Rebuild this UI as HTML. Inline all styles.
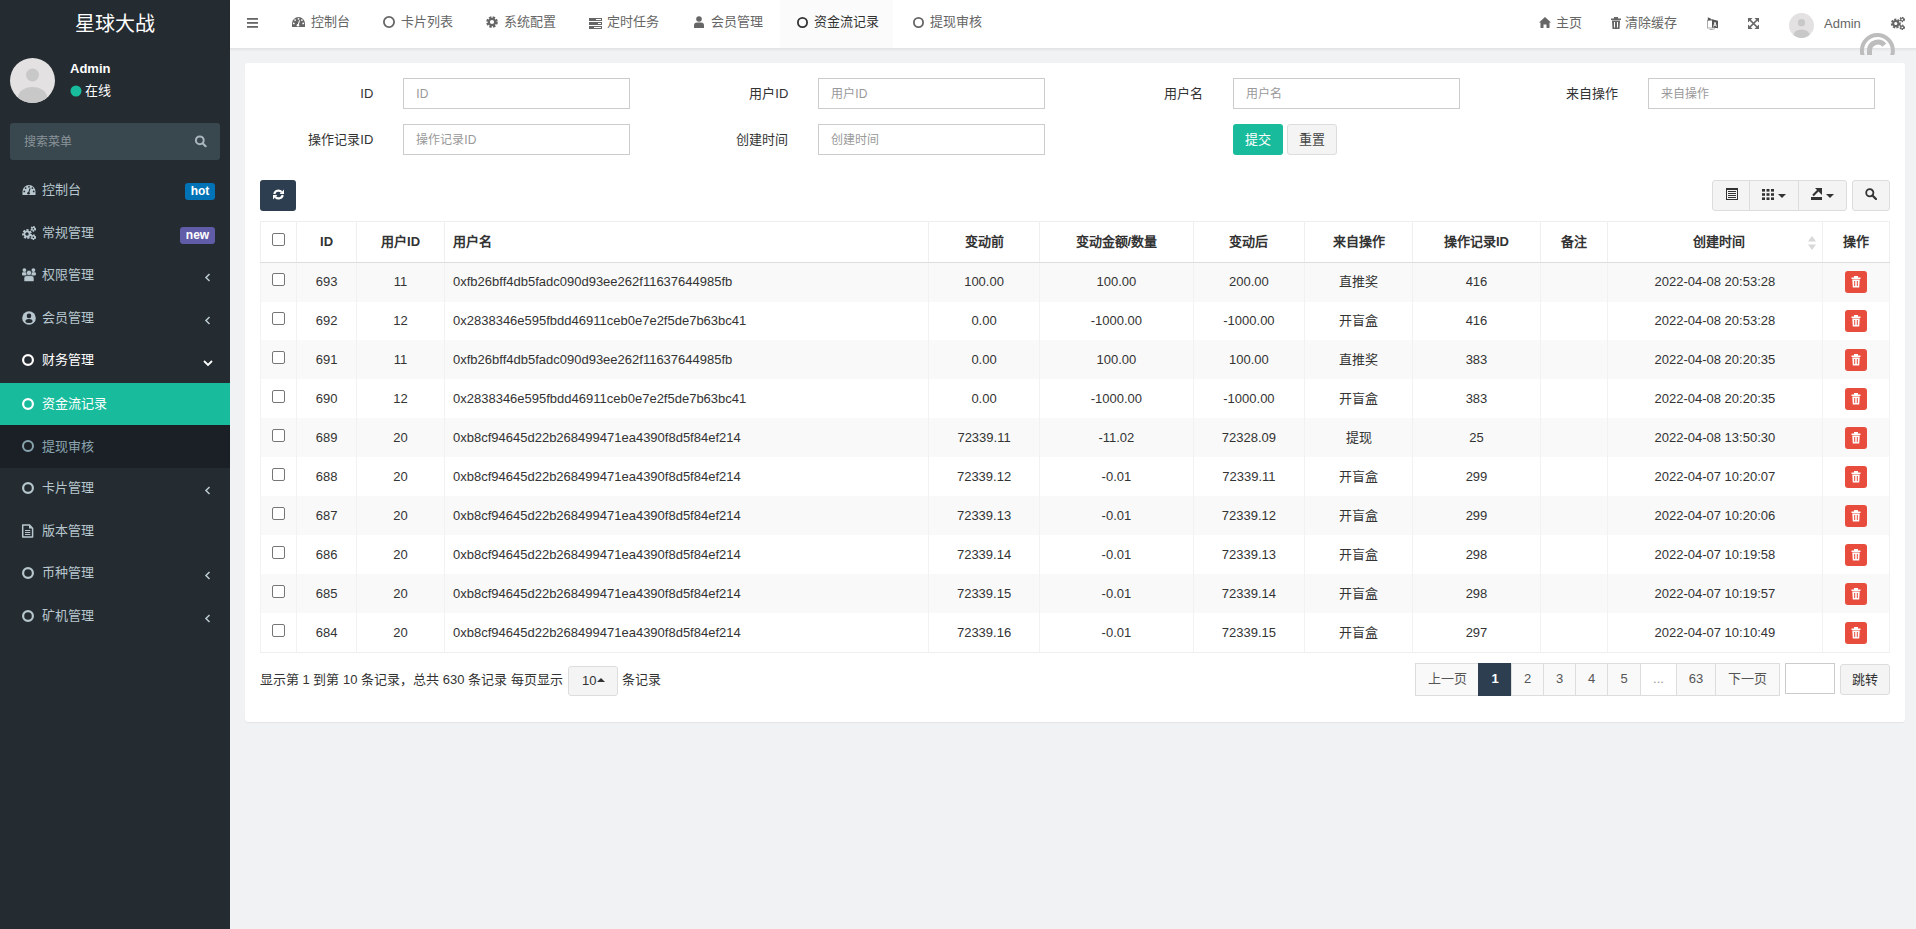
<!DOCTYPE html><html lang="zh-CN"><head><meta charset="utf-8"><title>资金流记录</title><style>
*{box-sizing:border-box;margin:0;padding:0}
html,body{width:1916px;height:929px;overflow:hidden}
body{background:#f0f2f3;font-family:"Liberation Sans", sans-serif;font-size:13px;color:#333;position:relative}
.abs{position:absolute}
#sb{position:absolute;left:0;top:0;width:230px;height:929px;background:#242b31}
.logo{position:absolute;left:0;top:1px;width:230px;height:48px;line-height:46px;text-align:center;color:#fff;font-size:20px}
.mi{position:absolute;left:0;width:230px;color:#b8c7ce;font-size:13px}
.mi .ic{position:absolute;left:21px}
.mi .tx{position:absolute;left:42px;white-space:nowrap}
.badge{position:absolute;right:15px;height:17px;line-height:17px;color:#fff;font-weight:bold;font-size:12px;text-align:center;border-radius:3px}
#hd{position:absolute;left:230px;top:0;width:1686px;height:49px;background:#fff;border-bottom:1px solid #e4e4e4;box-shadow:0 1px 2px rgba(0,0,0,.06)}
.nt{position:absolute;top:0;height:48px;line-height:44px;color:#666;white-space:nowrap}
.panel{position:absolute;left:245px;top:63px;width:1660px;height:659px;background:#fff;border-radius:3px;box-shadow:0 1px 1px rgba(0,0,0,.06)}
.lbl{position:absolute;text-align:right;white-space:nowrap;color:#333}
.inp{position:absolute;height:31px;border:1px solid #ccc;background:#fff;color:#999;padding-left:12px;line-height:31px;white-space:nowrap;font-size:12px}
.btn{position:absolute;border-radius:3px;text-align:center;white-space:nowrap}
table{border-collapse:collapse}
.tbl{position:absolute;left:260px;top:221px;width:1630px;border-collapse:collapse;table-layout:fixed}
.tbl th{height:41px;font-weight:bold;text-align:center;border-left:1px solid #f0f0f0;border-top:1px solid #eee;border-bottom:1px solid #ddd;padding:0;vertical-align:middle}
.tbl td{height:39px;text-align:center;border-left:1px solid #f0f0f0;padding:0;vertical-align:middle;white-space:nowrap}
.tbl tr.odd td{background:#f9f9f9}
.tbl th:last-child,.tbl td:last-child{border-right:1px solid #f0f0f0}
.cb{display:inline-block;width:13px;height:13px;border:1px solid #767676;border-radius:2px;background:#fff;vertical-align:middle}
.del{display:inline-block;width:22px;height:22px;background:#e74c3c;border-radius:3px;vertical-align:middle;position:relative}
.pg{position:absolute;top:663px;height:33px;line-height:29px;text-align:center;border:1px solid #ddd;background:#f9f9f9;color:#555}
</style></head><body>
<div id="sb">
<div class="logo">星球大战</div>
<svg class="abs" style="left:10px;top:58px" width="45" height="45" viewBox="0 0 45 45">
<defs><clipPath id="av1"><circle cx="22.5" cy="22.5" r="22.5"/></clipPath></defs>
<circle cx="22.5" cy="22.5" r="22.5" fill="#e3e1e1"/>
<g clip-path="url(#av1)"><circle cx="22.5" cy="17" r="6.5" fill="#c9c8c8"/>
<ellipse cx="22.5" cy="39.5" rx="14.5" ry="10.5" fill="#c9c8c8"/></g>
</svg>
<div class="abs" style="left:70px;top:61px;color:#fff;font-weight:bold;font-size:13px;line-height:16px">Admin</div>
<svg class="abs" style="left:70px;top:85px" width="12" height="12"><circle cx="6" cy="6" r="5.5" fill="#18bc9c"/></svg>
<div class="abs" style="left:85px;top:82px;color:#fff;font-size:13px;line-height:18px">在线</div>
<div class="abs" style="left:10px;top:123px;width:210px;height:37px;background:#39474f;border-radius:3px"></div>
<div class="abs" style="left:24px;top:133px;color:#8a9499;font-size:12px;line-height:18px">搜索菜单</div>
<svg class="abs" style="left:194px;top:135px" width="13" height="13" viewBox="0 0 13 13"><circle cx="5.8" cy="5.3" r="3.9" fill="none" stroke="#a9b6bc" stroke-width="2"/><path d="M8.6 8.3 L11.6 11.2" stroke="#a9b6bc" stroke-width="2.2" stroke-linecap="round"/></svg>
<div class="mi" style="top:169px;height:42px;color:#b8c7ce">
<div class="ic" style="top:14.0px;height:14px;display:flex;align-items:center;left:22px"><svg width="14" height="10" viewBox="0 0 13 10"><path d="M0 10 L0 6.5 A6.5 6.5 0 0 1 13 6.5 L13 10 Z" fill="#b8c7ce"/><g fill="#242b31"><circle cx="6.5" cy="1.8" r="0.9"/><circle cx="3.1" cy="3.1" r="0.9"/><circle cx="9.9" cy="3.1" r="0.9"/><circle cx="1.8" cy="6.4" r="0.9"/><circle cx="11.2" cy="6.4" r="0.9"/><circle cx="6" cy="8.3" r="1.3"/></g><path d="M6 8.3 L7.6 3.3" stroke="#242b31" stroke-width="1.1"/></svg></div>
<div class="tx" style="top:0;line-height:42px">控制台</div>
<div class="badge" style="top:14.0px;width:30px;background:#0073b7">hot</div>
</div>
<div class="mi" style="top:212px;height:42px;color:#b8c7ce">
<div class="ic" style="top:14.0px;height:14px;display:flex;align-items:center;left:22px"><svg width="14" height="14" viewBox="0 0 14 14"><circle cx="5" cy="8" r="3.6" fill="none" stroke="#b8c7ce" stroke-width="2.6" stroke-dasharray="2 1.2"/><circle cx="5" cy="8" r="2.6" fill="none" stroke="#b8c7ce" stroke-width="1.8"/><circle cx="11.3" cy="2.8" r="1.9" fill="none" stroke="#b8c7ce" stroke-width="1.9" stroke-dasharray="1.2 0.8"/><circle cx="11.3" cy="2.8" r="1.5" fill="none" stroke="#b8c7ce" stroke-width="1.2"/><circle cx="11.3" cy="11.2" r="1.9" fill="none" stroke="#b8c7ce" stroke-width="1.9" stroke-dasharray="1.2 0.8"/><circle cx="11.3" cy="11.2" r="1.5" fill="none" stroke="#b8c7ce" stroke-width="1.2"/></svg></div>
<div class="tx" style="top:0;line-height:42px">常规管理</div>
<div class="badge" style="top:15.0px;width:35px;background:#605ca8">new</div>
</div>
<div class="mi" style="top:254px;height:42px;color:#b8c7ce">
<div class="ic" style="top:14.0px;height:14px;display:flex;align-items:center;left:22px"><svg width="14" height="14" viewBox="0 0 14 14"><circle cx="2.4" cy="2.1" r="1.9" fill="#b8c7ce"/><circle cx="11.4" cy="2.1" r="1.9" fill="#b8c7ce"/><rect x="0" y="4.2" width="4.6" height="3.4" rx="1" fill="#b8c7ce"/><rect x="9.3" y="4.2" width="4.6" height="3.4" rx="1" fill="#b8c7ce"/><circle cx="7" cy="4.9" r="2.6" fill="#b8c7ce" stroke="#242b31" stroke-width="0.6"/><path d="M2 13.5 L2 10.2 Q2 7.6 4.6 7.6 L9.4 7.6 Q12 7.6 12 10.2 L12 13.5 Z" fill="#b8c7ce" stroke="#242b31" stroke-width="0.6"/></svg></div>
<div class="tx" style="top:0;line-height:42px">权限管理</div>
<div class="abs" style="left:204px;top:16.0px"><svg width="7" height="9" viewBox="0 0 7 9"><path d="M5.5 1 L2 4.5 L5.5 8" fill="none" stroke="#b8c7ce" stroke-width="1.6"/></svg></div>
</div>
<div class="mi" style="top:297px;height:42px;color:#b8c7ce">
<div class="ic" style="top:14.0px;height:14px;display:flex;align-items:center;left:22px"><svg width="14" height="14" viewBox="0 0 14 14"><circle cx="7" cy="7" r="6.8" fill="#b8c7ce"/><circle cx="7" cy="4.9" r="2.3" fill="#242b31"/><path d="M3.3 10.2 Q3.8 8 7 8 Q10.2 8 10.7 10.2 Q10.2 12.1 7 12.1 Q3.8 12.1 3.3 10.2 Z" fill="#242b31"/></svg></div>
<div class="tx" style="top:0;line-height:42px">会员管理</div>
<div class="abs" style="left:204px;top:16.0px"><svg width="7" height="9" viewBox="0 0 7 9"><path d="M5.5 1 L2 4.5 L5.5 8" fill="none" stroke="#b8c7ce" stroke-width="1.6"/></svg></div>
</div>
<div class="mi" style="top:339px;height:42px;color:#fff">
<div class="ic" style="top:14.0px;height:14px;display:flex;align-items:center;left:22px"><svg width="12" height="12" viewBox="0 0 12 12"><circle cx="6.0" cy="6.0" r="4.9" fill="none" stroke="#fff" stroke-width="2.2"/></svg></div>
<div class="tx" style="top:0;line-height:42px">财务管理</div>
<div class="abs" style="left:203px;top:16.0px"><svg width="10" height="8" viewBox="0 0 10 8"><path d="M1 2 L5 6 L9 2" fill="none" stroke="#fff" stroke-width="1.8"/></svg></div>
</div>
<div class="mi" style="top:383px;height:42px;background:#18bc9c;color:#fff">
<div class="ic" style="top:15px;left:22px"><svg width="12" height="12" viewBox="0 0 12 12"><circle cx="6.0" cy="6.0" r="4.9" fill="none" stroke="#fff" stroke-width="2.2"/></svg></div><div class="tx" style="line-height:42px">资金流记录</div></div>
<div class="mi" style="top:425px;height:43px;background:#1b2026;color:#8aa4af">
<div class="ic" style="top:15px;left:22px"><svg width="12" height="12" viewBox="0 0 12 12"><circle cx="6.0" cy="6.0" r="5.0" fill="none" stroke="#8aa4af" stroke-width="2"/></svg></div><div class="tx" style="line-height:43px">提现审核</div></div>
<div class="mi" style="top:467px;height:42px">
<div class="ic" style="top:14.0px;height:14px;display:flex;align-items:center;left:22px"><svg width="12" height="12" viewBox="0 0 12 12"><circle cx="6.0" cy="6.0" r="4.9" fill="none" stroke="#b8c7ce" stroke-width="2.2"/></svg></div>
<div class="tx" style="top:0;line-height:42px">卡片管理</div>
<div class="abs" style="left:204px;top:16.0px"><svg width="7" height="9" viewBox="0 0 7 9"><path d="M5.5 1 L2 4.5 L5.5 8" fill="none" stroke="#b8c7ce" stroke-width="1.6"/></svg></div>
</div>
<div class="mi" style="top:510px;height:42px">
<div class="ic" style="top:14.0px;height:14px;display:flex;align-items:center;"><svg width="13" height="14" viewBox="0 0 13 14"><path d="M1.7 0.9 L8.3 0.9 L11.6 4.2 L11.6 13 L1.7 13 Z" fill="none" stroke="#b8c7ce" stroke-width="1.5" stroke-linejoin="round"/><path d="M8 1 L8 4.5 L11.5 4.5 Z" fill="#b8c7ce"/><path d="M4 6.5H9.3M4 8.5H9.3M4 10.5H9.3" stroke="#b8c7ce" stroke-width="1"/></svg></div>
<div class="tx" style="top:0;line-height:42px">版本管理</div>
</div>
<div class="mi" style="top:552px;height:42px">
<div class="ic" style="top:14.0px;height:14px;display:flex;align-items:center;left:22px"><svg width="12" height="12" viewBox="0 0 12 12"><circle cx="6.0" cy="6.0" r="4.9" fill="none" stroke="#b8c7ce" stroke-width="2.2"/></svg></div>
<div class="tx" style="top:0;line-height:42px">币种管理</div>
<div class="abs" style="left:204px;top:16.0px"><svg width="7" height="9" viewBox="0 0 7 9"><path d="M5.5 1 L2 4.5 L5.5 8" fill="none" stroke="#b8c7ce" stroke-width="1.6"/></svg></div>
</div>
<div class="mi" style="top:595px;height:42px">
<div class="ic" style="top:14.0px;height:14px;display:flex;align-items:center;left:22px"><svg width="12" height="12" viewBox="0 0 12 12"><circle cx="6.0" cy="6.0" r="4.9" fill="none" stroke="#b8c7ce" stroke-width="2.2"/></svg></div>
<div class="tx" style="top:0;line-height:42px">矿机管理</div>
<div class="abs" style="left:204px;top:16.0px"><svg width="7" height="9" viewBox="0 0 7 9"><path d="M5.5 1 L2 4.5 L5.5 8" fill="none" stroke="#b8c7ce" stroke-width="1.6"/></svg></div>
</div>
</div>
<div id="hd"></div>
<svg class="abs" style="left:247px;top:18px" width="11" height="10"><rect x="0" y="0" width="11" height="1.8" fill="#666"/><rect x="0" y="4" width="11" height="1.8" fill="#666"/><rect x="0" y="8" width="11" height="1.8" fill="#666"/></svg>
<div class="abs" style="left:780px;top:0;width:113px;height:48px;background:#fbfbfb"></div>
<div class="abs" style="left:292px;top:16px;height:12px;display:flex;align-items:center"><svg width="13" height="10" viewBox="0 0 13 10"><path d="M0 10 L0 6.5 A6.5 6.5 0 0 1 13 6.5 L13 10 Z" fill="#666"/><g fill="#fff"><circle cx="6.5" cy="1.8" r="0.9"/><circle cx="3.1" cy="3.1" r="0.9"/><circle cx="9.9" cy="3.1" r="0.9"/><circle cx="1.8" cy="6.4" r="0.9"/><circle cx="11.2" cy="6.4" r="0.9"/><circle cx="6" cy="8.3" r="1.3"/></g><path d="M6 8.3 L7.6 3.3" stroke="#fff" stroke-width="1.1"/></svg></div>
<div class="nt" style="left:311px;color:#666">控制台</div>
<div class="abs" style="left:383px;top:16px;height:12px;display:flex;align-items:center"><svg width="12" height="12" viewBox="0 0 12 12"><circle cx="6.0" cy="6.0" r="5.1" fill="none" stroke="#666" stroke-width="1.8"/></svg></div>
<div class="nt" style="left:401px;color:#666">卡片列表</div>
<div class="abs" style="left:486px;top:16px;height:12px;display:flex;align-items:center"><svg width="12" height="12" viewBox="0 0 12 12"><circle cx="6" cy="6" r="4.3" fill="none" stroke="#666" stroke-width="3" stroke-dasharray="2.2 1.2"/><circle cx="6" cy="6" r="3.2" fill="none" stroke="#666" stroke-width="2.2"/></svg></div>
<div class="nt" style="left:504px;color:#666">系统配置</div>
<div class="abs" style="left:589px;top:17px;height:12px;display:flex;align-items:center"><svg width="13" height="11" viewBox="0 0 13 11"><rect x="0" y="0" width="13" height="3" fill="#666"/><rect x="0" y="4" width="13" height="3" fill="#666"/><rect x="0" y="8" width="13" height="3" fill="#666"/><rect x="7" y="1" width="5" height="1" fill="#fff"/><rect x="9" y="5" width="3" height="1" fill="#fff"/><rect x="5" y="9" width="7" height="1" fill="#fff"/></svg></div>
<div class="nt" style="left:607px;color:#666">定时任务</div>
<div class="abs" style="left:694px;top:16px;height:12px;display:flex;align-items:center"><svg width="10" height="12" viewBox="0 0 10 12"><circle cx="5" cy="3" r="2.8" fill="#666"/><path d="M0 12 L0 9.5 Q0 6.5 3 6.5 L7 6.5 Q10 6.5 10 9.5 L10 12 Z" fill="#666"/></svg></div>
<div class="nt" style="left:711px;color:#666">会员管理</div>
<div class="abs" style="left:797px;top:16px;height:12px;display:flex;align-items:center"><svg width="11" height="11" viewBox="0 0 11 11"><circle cx="5.5" cy="5.5" r="4.6" fill="none" stroke="#333" stroke-width="1.8"/></svg></div>
<div class="nt" style="left:814px;color:#333">资金流记录</div>
<div class="abs" style="left:913px;top:16px;height:12px;display:flex;align-items:center"><svg width="11" height="11" viewBox="0 0 11 11"><circle cx="5.5" cy="5.5" r="4.6" fill="none" stroke="#666" stroke-width="1.8"/></svg></div>
<div class="nt" style="left:930px;color:#666">提现审核</div>
<svg class="abs" style="left:1539px;top:17px" width="12" height="11" viewBox="0 0 12 11"><path d="M6 0 L12 5.5 L10.5 5.5 L10.5 11 L7.5 11 L7.5 7.5 L4.5 7.5 L4.5 11 L1.5 11 L1.5 5.5 L0 5.5 Z" fill="#666"/></svg>
<div class="nt" style="left:1556px;line-height:46px">主页</div>
<svg class="abs" style="left:1611px;top:17px" width="10" height="12" viewBox="0 0 10 12"><rect x="0" y="1.5" width="10" height="1.5" fill="#666"/><rect x="3" y="0" width="4" height="2" fill="#666"/><path d="M1 3.5 L9 3.5 L8.5 12 L1.5 12 Z" fill="#666"/><rect x="3" y="5" width="1" height="5.5" fill="#fff"/><rect x="6" y="5" width="1" height="5.5" fill="#fff"/></svg>
<div class="nt" style="left:1625px;line-height:46px">清除缓存</div>
<svg class="abs" style="left:1707px;top:17px" width="11" height="13" viewBox="0 0 11 13"><rect x="0.5" y="3.5" width="5" height="7.5" fill="none" stroke="#999" stroke-width="0.8"/><path d="M5 2.3 L11 3.8 L11 11.3 L5 10.5 Z" fill="#555"/><path d="M0.8 0.3 L5.5 2.4 L0.8 3.4 Z" fill="#555"/><path d="M6.6 9.6 L8 5.2 L9.4 9.6 M7.1 8.2 H8.9" fill="none" stroke="#fff" stroke-width="0.9"/><path d="M2.5 12.5 Q6 12.9 8 11.6" fill="none" stroke="#888" stroke-width="0.7"/></svg>
<svg class="abs" style="left:1748px;top:18px" width="11" height="11" viewBox="0 0 11 11"><path d="M2 2 L9 9 M9 2 L2 9" stroke="#666" stroke-width="1.7"/><path d="M0 0 L4.6 0 L0 4.6 Z M11 0 L6.4 0 L11 4.6 Z M0 11 L4.6 11 L0 6.4 Z M11 11 L6.4 11 L11 6.4 Z" fill="#666"/></svg>
<svg class="abs" style="left:1789px;top:13px" width="25" height="25" viewBox="0 0 45 45">
<defs><clipPath id="av2"><circle cx="22.5" cy="22.5" r="22.5"/></clipPath></defs>
<circle cx="22.5" cy="22.5" r="22.5" fill="#e3e1e1"/>
<g clip-path="url(#av2)"><circle cx="22.5" cy="17.5" r="6.5" fill="#c9c8c8"/>
<ellipse cx="22.5" cy="40" rx="14.5" ry="10.5" fill="#c9c8c8"/></g>
</svg>
<div class="nt" style="left:1824px;line-height:48px">Admin</div>
<svg class="abs" style="left:1890px;top:16px" width="15" height="14" viewBox="0 0 15 14"><circle cx="5.8" cy="7.5" r="3.7" fill="none" stroke="#666" stroke-width="2.6" stroke-dasharray="2 1.1"/><circle cx="5.8" cy="7.5" r="2.6" fill="none" stroke="#666" stroke-width="2"/><circle cx="12.2" cy="3.5" r="1.9" fill="none" stroke="#666" stroke-width="1.8" stroke-dasharray="1.1 0.9"/><circle cx="12.2" cy="3.5" r="1.5" fill="none" stroke="#666" stroke-width="1.1"/><circle cx="12.2" cy="11.4" r="1.9" fill="none" stroke="#666" stroke-width="1.8" stroke-dasharray="1.1 0.9"/><circle cx="12.2" cy="11.4" r="1.5" fill="none" stroke="#666" stroke-width="1.1"/></svg>
<div class="panel"></div>
<div class="lbl" style="left:260px;width:113.3px;top:78px;line-height:31px">ID</div>
<div class="inp" style="left:403.3px;top:78px;width:227px">ID</div>
<div class="lbl" style="left:675px;width:113.3px;top:78px;line-height:31px">用户ID</div>
<div class="inp" style="left:818.3px;top:78px;width:227px">用户ID</div>
<div class="lbl" style="left:1090px;width:113.3px;top:78px;line-height:31px">用户名</div>
<div class="inp" style="left:1233.3px;top:78px;width:227px">用户名</div>
<div class="lbl" style="left:1505px;width:113.3px;top:78px;line-height:31px">来自操作</div>
<div class="inp" style="left:1648.3px;top:78px;width:227px">来自操作</div>
<div class="lbl" style="left:260px;width:113.3px;top:124px;line-height:31px">操作记录ID</div>
<div class="inp" style="left:403.3px;top:124px;width:227px">操作记录ID</div>
<div class="lbl" style="left:675px;width:113.3px;top:124px;line-height:31px">创建时间</div>
<div class="inp" style="left:818.3px;top:124px;width:227px">创建时间</div>
<div class="btn" style="left:1233px;top:124px;width:50px;height:31px;line-height:31px;background:#18bc9c;color:#fff">提交</div>
<div class="btn" style="left:1287px;top:124px;width:50px;height:31px;line-height:29px;background:#f4f4f4;border:1px solid #ddd;color:#444">重置</div>
<div class="btn" style="left:260px;top:180px;width:36px;height:31px;background:#2c3e50"></div>
<svg class="abs" style="left:273px;top:189px" width="11" height="11" viewBox="0 0 11 11"><path d="M1.3 5 A4.2 4.2 0 0 1 8.6 3" fill="none" stroke="#fff" stroke-width="2.2"/><path d="M11 0.6 L11 5 L6.6 5 Z" fill="#fff"/><path d="M9.7 6 A4.2 4.2 0 0 1 2.4 8" fill="none" stroke="#fff" stroke-width="2.2"/><path d="M0 10.4 L0 6 L4.4 6 Z" fill="#fff"/></svg>
<div class="btn" style="left:1712px;top:180px;width:135px;height:31px;background:#f4f4f4;border:1px solid #ddd"></div>
<div class="abs" style="left:1749px;top:180px;width:1px;height:31px;background:#ddd"></div>
<div class="abs" style="left:1798px;top:180px;width:1px;height:31px;background:#ddd"></div>
<div class="btn" style="left:1852px;top:180px;width:38px;height:31px;background:#f4f4f4;border:1px solid #ddd"></div>
<svg class="abs" style="left:1726px;top:188px" width="12" height="12" viewBox="0 0 12 12"><rect x="0.5" y="0.5" width="11" height="11" fill="none" stroke="#333" stroke-width="1"/><rect x="0" y="0" width="12" height="2" fill="#333"/><path d="M2 3.5H10M2 5.5H10M2 7.5H10M2 9.5H10" stroke="#333" stroke-width="1"/></svg>
<svg class="abs" style="left:1762px;top:189px" width="12" height="11" viewBox="0 0 12 11"><g fill="#333"><rect x="0" y="0" width="3" height="2.6"/><rect x="4.5" y="0" width="3" height="2.6"/><rect x="9" y="0" width="3" height="2.6"/><rect x="0" y="4.2" width="3" height="2.6"/><rect x="4.5" y="4.2" width="3" height="2.6"/><rect x="9" y="4.2" width="3" height="2.6"/><rect x="0" y="8.4" width="3" height="2.6"/><rect x="4.5" y="8.4" width="3" height="2.6"/><rect x="9" y="8.4" width="3" height="2.6"/></g></svg>
<svg class="abs" style="left:1778px;top:194px" width="8" height="4"><path d="M0 0 L8 0 L4 4 Z" fill="#333"/></svg>
<svg class="abs" style="left:1811px;top:188px" width="11" height="12" viewBox="0 0 11 12"><rect x="0" y="9" width="11" height="3" fill="#333"/><path d="M2 7.5 L7.5 2" stroke="#333" stroke-width="2.2"/><path d="M4 0 L11 0 L11 7 Z" fill="#333"/></svg>
<svg class="abs" style="left:1826px;top:194px" width="8" height="4"><path d="M0 0 L8 0 L4 4 Z" fill="#333"/></svg>
<svg class="abs" style="left:1865px;top:188px" width="12" height="12" viewBox="0 0 12 12"><circle cx="4.8" cy="4.8" r="3.6" fill="none" stroke="#333" stroke-width="1.8"/><path d="M7.5 7.5 L11 11" stroke="#333" stroke-width="2.2" stroke-linecap="round"/></svg>
<div class="abs" style="left:260px;top:263px;width:1630px;height:39px;background:#f9f9f9"></div>
<div class="abs" style="left:260px;top:340px;width:1630px;height:39px;background:#f9f9f9"></div>
<div class="abs" style="left:260px;top:418px;width:1630px;height:39px;background:#f9f9f9"></div>
<div class="abs" style="left:260px;top:496px;width:1630px;height:39px;background:#f9f9f9"></div>
<div class="abs" style="left:260px;top:574px;width:1630px;height:39px;background:#f9f9f9"></div>
<div class="abs" style="left:260px;top:221px;width:1630px;height:1px;background:#eee"></div>
<div class="abs" style="left:260px;top:262px;width:1630px;height:1px;background:#ddd"></div>
<div class="abs" style="left:260px;top:652px;width:1630px;height:1px;background:#eee"></div>
<div class="abs" style="left:260px;top:221px;width:1px;height:41px;background:#efefef"></div>
<div class="abs" style="left:260px;top:263px;width:1px;height:389px;background:#f2f2f2"></div>
<div class="abs" style="left:296px;top:221px;width:1px;height:41px;background:#efefef"></div>
<div class="abs" style="left:296px;top:263px;width:1px;height:389px;background:#f2f2f2"></div>
<div class="abs" style="left:356px;top:221px;width:1px;height:41px;background:#efefef"></div>
<div class="abs" style="left:356px;top:263px;width:1px;height:389px;background:#f2f2f2"></div>
<div class="abs" style="left:444px;top:221px;width:1px;height:41px;background:#efefef"></div>
<div class="abs" style="left:444px;top:263px;width:1px;height:389px;background:#f2f2f2"></div>
<div class="abs" style="left:928px;top:221px;width:1px;height:41px;background:#efefef"></div>
<div class="abs" style="left:928px;top:263px;width:1px;height:389px;background:#f2f2f2"></div>
<div class="abs" style="left:1039px;top:221px;width:1px;height:41px;background:#efefef"></div>
<div class="abs" style="left:1039px;top:263px;width:1px;height:389px;background:#f2f2f2"></div>
<div class="abs" style="left:1193px;top:221px;width:1px;height:41px;background:#efefef"></div>
<div class="abs" style="left:1193px;top:263px;width:1px;height:389px;background:#f2f2f2"></div>
<div class="abs" style="left:1304px;top:221px;width:1px;height:41px;background:#efefef"></div>
<div class="abs" style="left:1304px;top:263px;width:1px;height:389px;background:#f2f2f2"></div>
<div class="abs" style="left:1412px;top:221px;width:1px;height:41px;background:#efefef"></div>
<div class="abs" style="left:1412px;top:263px;width:1px;height:389px;background:#f2f2f2"></div>
<div class="abs" style="left:1540px;top:221px;width:1px;height:41px;background:#efefef"></div>
<div class="abs" style="left:1540px;top:263px;width:1px;height:389px;background:#f2f2f2"></div>
<div class="abs" style="left:1607px;top:221px;width:1px;height:41px;background:#efefef"></div>
<div class="abs" style="left:1607px;top:263px;width:1px;height:389px;background:#f2f2f2"></div>
<div class="abs" style="left:1822px;top:221px;width:1px;height:41px;background:#efefef"></div>
<div class="abs" style="left:1822px;top:263px;width:1px;height:389px;background:#f2f2f2"></div>
<div class="abs" style="left:1889px;top:221px;width:1px;height:41px;background:#efefef"></div>
<div class="abs" style="left:1889px;top:263px;width:1px;height:389px;background:#f2f2f2"></div>
<div class="cb abs" style="left:272px;top:233px"></div>
<div class="abs" style="left:296.4px;top:221px;width:60.30000000000001px;height:41px;line-height:41px;text-align:center;white-space:nowrap;font-weight:bold;color:#333">ID</div>
<div class="abs" style="left:356.7px;top:221px;width:87.69999999999999px;height:41px;line-height:41px;text-align:center;white-space:nowrap;font-weight:bold;color:#333">用户ID</div>
<div class="abs" style="left:453.0px;top:221px;height:41px;line-height:41px;white-space:nowrap;font-weight:bold;color:#333">用户名</div>
<div class="abs" style="left:928.6px;top:221px;width:110.89999999999998px;height:41px;line-height:41px;text-align:center;white-space:nowrap;font-weight:bold;color:#333">变动前</div>
<div class="abs" style="left:1039.5px;top:221px;width:153.79999999999995px;height:41px;line-height:41px;text-align:center;white-space:nowrap;font-weight:bold;color:#333">变动金额/数量</div>
<div class="abs" style="left:1193.3px;top:221px;width:111.29999999999995px;height:41px;line-height:41px;text-align:center;white-space:nowrap;font-weight:bold;color:#333">变动后</div>
<div class="abs" style="left:1304.6px;top:221px;width:107.90000000000009px;height:41px;line-height:41px;text-align:center;white-space:nowrap;font-weight:bold;color:#333">来自操作</div>
<div class="abs" style="left:1412.5px;top:221px;width:128.0px;height:41px;line-height:41px;text-align:center;white-space:nowrap;font-weight:bold;color:#333">操作记录ID</div>
<div class="abs" style="left:1540.5px;top:221px;width:66.5px;height:41px;line-height:41px;text-align:center;white-space:nowrap;font-weight:bold;color:#333">备注</div>
<div class="abs" style="left:1615px;top:221px;width:207.70000000000005px;height:41px;line-height:41px;text-align:center;white-space:nowrap;font-weight:bold;color:#333">创建时间</div>
<div class="abs" style="left:1822.7px;top:221px;width:66.79999999999995px;height:41px;line-height:41px;text-align:center;white-space:nowrap;font-weight:bold;color:#333">操作</div>
<svg class="abs" style="left:1808px;top:236px" width="8" height="14" viewBox="0 0 8 14"><path d="M4 0 L8 5.5 L0 5.5 Z" fill="#d8d8d8"/><path d="M4 14 L8 8.5 L0 8.5 Z" fill="#d8d8d8"/></svg>
<div class="cb abs" style="left:272px;top:273px"></div>
<div class="abs" style="left:296.4px;top:262px;width:60.30000000000001px;height:39px;line-height:39px;text-align:center;white-space:nowrap;">693</div>
<div class="abs" style="left:356.7px;top:262px;width:87.69999999999999px;height:39px;line-height:39px;text-align:center;white-space:nowrap;">11</div>
<div class="abs" style="left:453.0px;top:262px;height:39px;line-height:39px;white-space:nowrap;">0xfb26bff4db5fadc090d93ee262f11637644985fb</div>
<div class="abs" style="left:928.6px;top:262px;width:110.89999999999998px;height:39px;line-height:39px;text-align:center;white-space:nowrap;">100.00</div>
<div class="abs" style="left:1039.5px;top:262px;width:153.79999999999995px;height:39px;line-height:39px;text-align:center;white-space:nowrap;">100.00</div>
<div class="abs" style="left:1193.3px;top:262px;width:111.29999999999995px;height:39px;line-height:39px;text-align:center;white-space:nowrap;">200.00</div>
<div class="abs" style="left:1304.6px;top:262px;width:107.90000000000009px;height:39px;line-height:39px;text-align:center;white-space:nowrap;">直推奖</div>
<div class="abs" style="left:1412.5px;top:262px;width:128.0px;height:39px;line-height:39px;text-align:center;white-space:nowrap;">416</div>
<div class="abs" style="left:1607px;top:262px;width:215.70000000000005px;height:39px;line-height:39px;text-align:center;white-space:nowrap;">2022-04-08 20:53:28</div>
<div class="abs" style="left:1845px;top:271px;width:22px;height:22px;background:#e74c3c;border-radius:3px"></div>
<svg class="abs" style="left:1851px;top:276px" width="10" height="12" viewBox="0 0 10 12"><rect x="0.5" y="1.5" width="9" height="1.5" fill="#fff"/><rect x="3" y="0" width="4" height="2" fill="#fff"/><path d="M1.3 3.5 L8.7 3.5 L8.2 11.5 L1.8 11.5 Z" fill="#fff"/><rect x="3.2" y="5" width="1" height="5" fill="#e74c3c"/><rect x="5.8" y="5" width="1" height="5" fill="#e74c3c"/></svg>
<div class="cb abs" style="left:272px;top:312px"></div>
<div class="abs" style="left:296.4px;top:301px;width:60.30000000000001px;height:39px;line-height:39px;text-align:center;white-space:nowrap;">692</div>
<div class="abs" style="left:356.7px;top:301px;width:87.69999999999999px;height:39px;line-height:39px;text-align:center;white-space:nowrap;">12</div>
<div class="abs" style="left:453.0px;top:301px;height:39px;line-height:39px;white-space:nowrap;">0x2838346e595fbdd46911ceb0e7e2f5de7b63bc41</div>
<div class="abs" style="left:928.6px;top:301px;width:110.89999999999998px;height:39px;line-height:39px;text-align:center;white-space:nowrap;">0.00</div>
<div class="abs" style="left:1039.5px;top:301px;width:153.79999999999995px;height:39px;line-height:39px;text-align:center;white-space:nowrap;">-1000.00</div>
<div class="abs" style="left:1193.3px;top:301px;width:111.29999999999995px;height:39px;line-height:39px;text-align:center;white-space:nowrap;">-1000.00</div>
<div class="abs" style="left:1304.6px;top:301px;width:107.90000000000009px;height:39px;line-height:39px;text-align:center;white-space:nowrap;">开盲盒</div>
<div class="abs" style="left:1412.5px;top:301px;width:128.0px;height:39px;line-height:39px;text-align:center;white-space:nowrap;">416</div>
<div class="abs" style="left:1607px;top:301px;width:215.70000000000005px;height:39px;line-height:39px;text-align:center;white-space:nowrap;">2022-04-08 20:53:28</div>
<div class="abs" style="left:1845px;top:310px;width:22px;height:22px;background:#e74c3c;border-radius:3px"></div>
<svg class="abs" style="left:1851px;top:315px" width="10" height="12" viewBox="0 0 10 12"><rect x="0.5" y="1.5" width="9" height="1.5" fill="#fff"/><rect x="3" y="0" width="4" height="2" fill="#fff"/><path d="M1.3 3.5 L8.7 3.5 L8.2 11.5 L1.8 11.5 Z" fill="#fff"/><rect x="3.2" y="5" width="1" height="5" fill="#e74c3c"/><rect x="5.8" y="5" width="1" height="5" fill="#e74c3c"/></svg>
<div class="cb abs" style="left:272px;top:351px"></div>
<div class="abs" style="left:296.4px;top:340px;width:60.30000000000001px;height:39px;line-height:39px;text-align:center;white-space:nowrap;">691</div>
<div class="abs" style="left:356.7px;top:340px;width:87.69999999999999px;height:39px;line-height:39px;text-align:center;white-space:nowrap;">11</div>
<div class="abs" style="left:453.0px;top:340px;height:39px;line-height:39px;white-space:nowrap;">0xfb26bff4db5fadc090d93ee262f11637644985fb</div>
<div class="abs" style="left:928.6px;top:340px;width:110.89999999999998px;height:39px;line-height:39px;text-align:center;white-space:nowrap;">0.00</div>
<div class="abs" style="left:1039.5px;top:340px;width:153.79999999999995px;height:39px;line-height:39px;text-align:center;white-space:nowrap;">100.00</div>
<div class="abs" style="left:1193.3px;top:340px;width:111.29999999999995px;height:39px;line-height:39px;text-align:center;white-space:nowrap;">100.00</div>
<div class="abs" style="left:1304.6px;top:340px;width:107.90000000000009px;height:39px;line-height:39px;text-align:center;white-space:nowrap;">直推奖</div>
<div class="abs" style="left:1412.5px;top:340px;width:128.0px;height:39px;line-height:39px;text-align:center;white-space:nowrap;">383</div>
<div class="abs" style="left:1607px;top:340px;width:215.70000000000005px;height:39px;line-height:39px;text-align:center;white-space:nowrap;">2022-04-08 20:20:35</div>
<div class="abs" style="left:1845px;top:349px;width:22px;height:22px;background:#e74c3c;border-radius:3px"></div>
<svg class="abs" style="left:1851px;top:354px" width="10" height="12" viewBox="0 0 10 12"><rect x="0.5" y="1.5" width="9" height="1.5" fill="#fff"/><rect x="3" y="0" width="4" height="2" fill="#fff"/><path d="M1.3 3.5 L8.7 3.5 L8.2 11.5 L1.8 11.5 Z" fill="#fff"/><rect x="3.2" y="5" width="1" height="5" fill="#e74c3c"/><rect x="5.8" y="5" width="1" height="5" fill="#e74c3c"/></svg>
<div class="cb abs" style="left:272px;top:390px"></div>
<div class="abs" style="left:296.4px;top:379px;width:60.30000000000001px;height:39px;line-height:39px;text-align:center;white-space:nowrap;">690</div>
<div class="abs" style="left:356.7px;top:379px;width:87.69999999999999px;height:39px;line-height:39px;text-align:center;white-space:nowrap;">12</div>
<div class="abs" style="left:453.0px;top:379px;height:39px;line-height:39px;white-space:nowrap;">0x2838346e595fbdd46911ceb0e7e2f5de7b63bc41</div>
<div class="abs" style="left:928.6px;top:379px;width:110.89999999999998px;height:39px;line-height:39px;text-align:center;white-space:nowrap;">0.00</div>
<div class="abs" style="left:1039.5px;top:379px;width:153.79999999999995px;height:39px;line-height:39px;text-align:center;white-space:nowrap;">-1000.00</div>
<div class="abs" style="left:1193.3px;top:379px;width:111.29999999999995px;height:39px;line-height:39px;text-align:center;white-space:nowrap;">-1000.00</div>
<div class="abs" style="left:1304.6px;top:379px;width:107.90000000000009px;height:39px;line-height:39px;text-align:center;white-space:nowrap;">开盲盒</div>
<div class="abs" style="left:1412.5px;top:379px;width:128.0px;height:39px;line-height:39px;text-align:center;white-space:nowrap;">383</div>
<div class="abs" style="left:1607px;top:379px;width:215.70000000000005px;height:39px;line-height:39px;text-align:center;white-space:nowrap;">2022-04-08 20:20:35</div>
<div class="abs" style="left:1845px;top:388px;width:22px;height:22px;background:#e74c3c;border-radius:3px"></div>
<svg class="abs" style="left:1851px;top:393px" width="10" height="12" viewBox="0 0 10 12"><rect x="0.5" y="1.5" width="9" height="1.5" fill="#fff"/><rect x="3" y="0" width="4" height="2" fill="#fff"/><path d="M1.3 3.5 L8.7 3.5 L8.2 11.5 L1.8 11.5 Z" fill="#fff"/><rect x="3.2" y="5" width="1" height="5" fill="#e74c3c"/><rect x="5.8" y="5" width="1" height="5" fill="#e74c3c"/></svg>
<div class="cb abs" style="left:272px;top:429px"></div>
<div class="abs" style="left:296.4px;top:418px;width:60.30000000000001px;height:39px;line-height:39px;text-align:center;white-space:nowrap;">689</div>
<div class="abs" style="left:356.7px;top:418px;width:87.69999999999999px;height:39px;line-height:39px;text-align:center;white-space:nowrap;">20</div>
<div class="abs" style="left:453.0px;top:418px;height:39px;line-height:39px;white-space:nowrap;">0xb8cf94645d22b268499471ea4390f8d5f84ef214</div>
<div class="abs" style="left:928.6px;top:418px;width:110.89999999999998px;height:39px;line-height:39px;text-align:center;white-space:nowrap;">72339.11</div>
<div class="abs" style="left:1039.5px;top:418px;width:153.79999999999995px;height:39px;line-height:39px;text-align:center;white-space:nowrap;">-11.02</div>
<div class="abs" style="left:1193.3px;top:418px;width:111.29999999999995px;height:39px;line-height:39px;text-align:center;white-space:nowrap;">72328.09</div>
<div class="abs" style="left:1304.6px;top:418px;width:107.90000000000009px;height:39px;line-height:39px;text-align:center;white-space:nowrap;">提现</div>
<div class="abs" style="left:1412.5px;top:418px;width:128.0px;height:39px;line-height:39px;text-align:center;white-space:nowrap;">25</div>
<div class="abs" style="left:1607px;top:418px;width:215.70000000000005px;height:39px;line-height:39px;text-align:center;white-space:nowrap;">2022-04-08 13:50:30</div>
<div class="abs" style="left:1845px;top:427px;width:22px;height:22px;background:#e74c3c;border-radius:3px"></div>
<svg class="abs" style="left:1851px;top:432px" width="10" height="12" viewBox="0 0 10 12"><rect x="0.5" y="1.5" width="9" height="1.5" fill="#fff"/><rect x="3" y="0" width="4" height="2" fill="#fff"/><path d="M1.3 3.5 L8.7 3.5 L8.2 11.5 L1.8 11.5 Z" fill="#fff"/><rect x="3.2" y="5" width="1" height="5" fill="#e74c3c"/><rect x="5.8" y="5" width="1" height="5" fill="#e74c3c"/></svg>
<div class="cb abs" style="left:272px;top:468px"></div>
<div class="abs" style="left:296.4px;top:457px;width:60.30000000000001px;height:39px;line-height:39px;text-align:center;white-space:nowrap;">688</div>
<div class="abs" style="left:356.7px;top:457px;width:87.69999999999999px;height:39px;line-height:39px;text-align:center;white-space:nowrap;">20</div>
<div class="abs" style="left:453.0px;top:457px;height:39px;line-height:39px;white-space:nowrap;">0xb8cf94645d22b268499471ea4390f8d5f84ef214</div>
<div class="abs" style="left:928.6px;top:457px;width:110.89999999999998px;height:39px;line-height:39px;text-align:center;white-space:nowrap;">72339.12</div>
<div class="abs" style="left:1039.5px;top:457px;width:153.79999999999995px;height:39px;line-height:39px;text-align:center;white-space:nowrap;">-0.01</div>
<div class="abs" style="left:1193.3px;top:457px;width:111.29999999999995px;height:39px;line-height:39px;text-align:center;white-space:nowrap;">72339.11</div>
<div class="abs" style="left:1304.6px;top:457px;width:107.90000000000009px;height:39px;line-height:39px;text-align:center;white-space:nowrap;">开盲盒</div>
<div class="abs" style="left:1412.5px;top:457px;width:128.0px;height:39px;line-height:39px;text-align:center;white-space:nowrap;">299</div>
<div class="abs" style="left:1607px;top:457px;width:215.70000000000005px;height:39px;line-height:39px;text-align:center;white-space:nowrap;">2022-04-07 10:20:07</div>
<div class="abs" style="left:1845px;top:466px;width:22px;height:22px;background:#e74c3c;border-radius:3px"></div>
<svg class="abs" style="left:1851px;top:471px" width="10" height="12" viewBox="0 0 10 12"><rect x="0.5" y="1.5" width="9" height="1.5" fill="#fff"/><rect x="3" y="0" width="4" height="2" fill="#fff"/><path d="M1.3 3.5 L8.7 3.5 L8.2 11.5 L1.8 11.5 Z" fill="#fff"/><rect x="3.2" y="5" width="1" height="5" fill="#e74c3c"/><rect x="5.8" y="5" width="1" height="5" fill="#e74c3c"/></svg>
<div class="cb abs" style="left:272px;top:507px"></div>
<div class="abs" style="left:296.4px;top:496px;width:60.30000000000001px;height:39px;line-height:39px;text-align:center;white-space:nowrap;">687</div>
<div class="abs" style="left:356.7px;top:496px;width:87.69999999999999px;height:39px;line-height:39px;text-align:center;white-space:nowrap;">20</div>
<div class="abs" style="left:453.0px;top:496px;height:39px;line-height:39px;white-space:nowrap;">0xb8cf94645d22b268499471ea4390f8d5f84ef214</div>
<div class="abs" style="left:928.6px;top:496px;width:110.89999999999998px;height:39px;line-height:39px;text-align:center;white-space:nowrap;">72339.13</div>
<div class="abs" style="left:1039.5px;top:496px;width:153.79999999999995px;height:39px;line-height:39px;text-align:center;white-space:nowrap;">-0.01</div>
<div class="abs" style="left:1193.3px;top:496px;width:111.29999999999995px;height:39px;line-height:39px;text-align:center;white-space:nowrap;">72339.12</div>
<div class="abs" style="left:1304.6px;top:496px;width:107.90000000000009px;height:39px;line-height:39px;text-align:center;white-space:nowrap;">开盲盒</div>
<div class="abs" style="left:1412.5px;top:496px;width:128.0px;height:39px;line-height:39px;text-align:center;white-space:nowrap;">299</div>
<div class="abs" style="left:1607px;top:496px;width:215.70000000000005px;height:39px;line-height:39px;text-align:center;white-space:nowrap;">2022-04-07 10:20:06</div>
<div class="abs" style="left:1845px;top:505px;width:22px;height:22px;background:#e74c3c;border-radius:3px"></div>
<svg class="abs" style="left:1851px;top:510px" width="10" height="12" viewBox="0 0 10 12"><rect x="0.5" y="1.5" width="9" height="1.5" fill="#fff"/><rect x="3" y="0" width="4" height="2" fill="#fff"/><path d="M1.3 3.5 L8.7 3.5 L8.2 11.5 L1.8 11.5 Z" fill="#fff"/><rect x="3.2" y="5" width="1" height="5" fill="#e74c3c"/><rect x="5.8" y="5" width="1" height="5" fill="#e74c3c"/></svg>
<div class="cb abs" style="left:272px;top:546px"></div>
<div class="abs" style="left:296.4px;top:535px;width:60.30000000000001px;height:39px;line-height:39px;text-align:center;white-space:nowrap;">686</div>
<div class="abs" style="left:356.7px;top:535px;width:87.69999999999999px;height:39px;line-height:39px;text-align:center;white-space:nowrap;">20</div>
<div class="abs" style="left:453.0px;top:535px;height:39px;line-height:39px;white-space:nowrap;">0xb8cf94645d22b268499471ea4390f8d5f84ef214</div>
<div class="abs" style="left:928.6px;top:535px;width:110.89999999999998px;height:39px;line-height:39px;text-align:center;white-space:nowrap;">72339.14</div>
<div class="abs" style="left:1039.5px;top:535px;width:153.79999999999995px;height:39px;line-height:39px;text-align:center;white-space:nowrap;">-0.01</div>
<div class="abs" style="left:1193.3px;top:535px;width:111.29999999999995px;height:39px;line-height:39px;text-align:center;white-space:nowrap;">72339.13</div>
<div class="abs" style="left:1304.6px;top:535px;width:107.90000000000009px;height:39px;line-height:39px;text-align:center;white-space:nowrap;">开盲盒</div>
<div class="abs" style="left:1412.5px;top:535px;width:128.0px;height:39px;line-height:39px;text-align:center;white-space:nowrap;">298</div>
<div class="abs" style="left:1607px;top:535px;width:215.70000000000005px;height:39px;line-height:39px;text-align:center;white-space:nowrap;">2022-04-07 10:19:58</div>
<div class="abs" style="left:1845px;top:544px;width:22px;height:22px;background:#e74c3c;border-radius:3px"></div>
<svg class="abs" style="left:1851px;top:549px" width="10" height="12" viewBox="0 0 10 12"><rect x="0.5" y="1.5" width="9" height="1.5" fill="#fff"/><rect x="3" y="0" width="4" height="2" fill="#fff"/><path d="M1.3 3.5 L8.7 3.5 L8.2 11.5 L1.8 11.5 Z" fill="#fff"/><rect x="3.2" y="5" width="1" height="5" fill="#e74c3c"/><rect x="5.8" y="5" width="1" height="5" fill="#e74c3c"/></svg>
<div class="cb abs" style="left:272px;top:585px"></div>
<div class="abs" style="left:296.4px;top:574px;width:60.30000000000001px;height:39px;line-height:39px;text-align:center;white-space:nowrap;">685</div>
<div class="abs" style="left:356.7px;top:574px;width:87.69999999999999px;height:39px;line-height:39px;text-align:center;white-space:nowrap;">20</div>
<div class="abs" style="left:453.0px;top:574px;height:39px;line-height:39px;white-space:nowrap;">0xb8cf94645d22b268499471ea4390f8d5f84ef214</div>
<div class="abs" style="left:928.6px;top:574px;width:110.89999999999998px;height:39px;line-height:39px;text-align:center;white-space:nowrap;">72339.15</div>
<div class="abs" style="left:1039.5px;top:574px;width:153.79999999999995px;height:39px;line-height:39px;text-align:center;white-space:nowrap;">-0.01</div>
<div class="abs" style="left:1193.3px;top:574px;width:111.29999999999995px;height:39px;line-height:39px;text-align:center;white-space:nowrap;">72339.14</div>
<div class="abs" style="left:1304.6px;top:574px;width:107.90000000000009px;height:39px;line-height:39px;text-align:center;white-space:nowrap;">开盲盒</div>
<div class="abs" style="left:1412.5px;top:574px;width:128.0px;height:39px;line-height:39px;text-align:center;white-space:nowrap;">298</div>
<div class="abs" style="left:1607px;top:574px;width:215.70000000000005px;height:39px;line-height:39px;text-align:center;white-space:nowrap;">2022-04-07 10:19:57</div>
<div class="abs" style="left:1845px;top:583px;width:22px;height:22px;background:#e74c3c;border-radius:3px"></div>
<svg class="abs" style="left:1851px;top:588px" width="10" height="12" viewBox="0 0 10 12"><rect x="0.5" y="1.5" width="9" height="1.5" fill="#fff"/><rect x="3" y="0" width="4" height="2" fill="#fff"/><path d="M1.3 3.5 L8.7 3.5 L8.2 11.5 L1.8 11.5 Z" fill="#fff"/><rect x="3.2" y="5" width="1" height="5" fill="#e74c3c"/><rect x="5.8" y="5" width="1" height="5" fill="#e74c3c"/></svg>
<div class="cb abs" style="left:272px;top:624px"></div>
<div class="abs" style="left:296.4px;top:613px;width:60.30000000000001px;height:39px;line-height:39px;text-align:center;white-space:nowrap;">684</div>
<div class="abs" style="left:356.7px;top:613px;width:87.69999999999999px;height:39px;line-height:39px;text-align:center;white-space:nowrap;">20</div>
<div class="abs" style="left:453.0px;top:613px;height:39px;line-height:39px;white-space:nowrap;">0xb8cf94645d22b268499471ea4390f8d5f84ef214</div>
<div class="abs" style="left:928.6px;top:613px;width:110.89999999999998px;height:39px;line-height:39px;text-align:center;white-space:nowrap;">72339.16</div>
<div class="abs" style="left:1039.5px;top:613px;width:153.79999999999995px;height:39px;line-height:39px;text-align:center;white-space:nowrap;">-0.01</div>
<div class="abs" style="left:1193.3px;top:613px;width:111.29999999999995px;height:39px;line-height:39px;text-align:center;white-space:nowrap;">72339.15</div>
<div class="abs" style="left:1304.6px;top:613px;width:107.90000000000009px;height:39px;line-height:39px;text-align:center;white-space:nowrap;">开盲盒</div>
<div class="abs" style="left:1412.5px;top:613px;width:128.0px;height:39px;line-height:39px;text-align:center;white-space:nowrap;">297</div>
<div class="abs" style="left:1607px;top:613px;width:215.70000000000005px;height:39px;line-height:39px;text-align:center;white-space:nowrap;">2022-04-07 10:10:49</div>
<div class="abs" style="left:1845px;top:622px;width:22px;height:22px;background:#e74c3c;border-radius:3px"></div>
<svg class="abs" style="left:1851px;top:627px" width="10" height="12" viewBox="0 0 10 12"><rect x="0.5" y="1.5" width="9" height="1.5" fill="#fff"/><rect x="3" y="0" width="4" height="2" fill="#fff"/><path d="M1.3 3.5 L8.7 3.5 L8.2 11.5 L1.8 11.5 Z" fill="#fff"/><rect x="3.2" y="5" width="1" height="5" fill="#e74c3c"/><rect x="5.8" y="5" width="1" height="5" fill="#e74c3c"/></svg>
<div class="abs" style="left:260px;top:670px;line-height:20px;white-space:nowrap;color:#333">显示第 1 到第 10 条记录，总共 630 条记录 每页显示</div>
<div class="btn" style="left:568px;top:666px;width:50px;height:30px;line-height:28px;background:#f4f4f4;border:1px solid #ddd;color:#333;text-align:left;padding-left:13px">10</div>
<svg class="abs" style="left:597px;top:678px" width="8" height="4"><path d="M0 4 L8 4 L4 0 Z" fill="#333"/></svg>
<div class="abs" style="left:622px;top:670px;line-height:20px;white-space:nowrap;color:#333">条记录</div>
<div class="pg" style="left:1415px;width:64px">上一页</div>
<div class="pg" style="left:1478px;width:34px;background:#2c3e50;border-color:#2c3e50;color:#fff;font-weight:bold">1</div>
<div class="pg" style="left:1511px;width:33px">2</div>
<div class="pg" style="left:1543px;width:33px">3</div>
<div class="pg" style="left:1575px;width:33px">4</div>
<div class="pg" style="left:1607px;width:34px">5</div>
<div class="pg" style="left:1640px;width:37px;background:#fff;color:#999">...</div>
<div class="pg" style="left:1676px;width:40px">63</div>
<div class="pg" style="left:1715px;width:65px">下一页</div>
<div class="abs" style="left:1785px;top:663px;width:50px;height:31px;border:1px solid #ccc;background:#fff"></div>
<div class="btn" style="left:1840px;top:664px;width:50px;height:31px;line-height:29px;background:#f4f4f4;border:1px solid #ddd;color:#333">跳转</div>
<svg class="abs" style="left:1858px;top:32px" width="40" height="23" viewBox="0 0 40 23"><circle cx="19.4" cy="18.5" r="15.5" fill="none" stroke="#bdbdbd" stroke-width="4"/><path d="M11.5 24.5 L11.5 18.5 A8.4 8.4 0 0 1 26.33 13.1" fill="none" stroke="#bdbdbd" stroke-width="5"/></svg>
</body></html>
